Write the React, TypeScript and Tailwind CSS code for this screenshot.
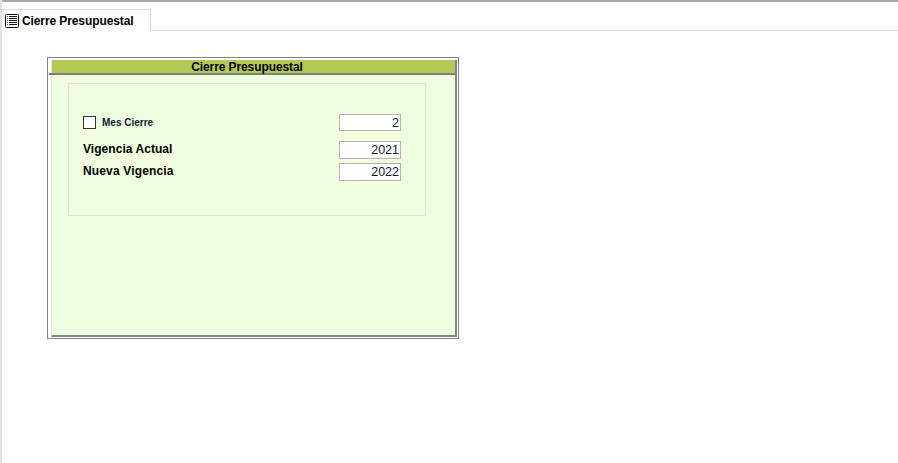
import React from 'react';

const Field = ({ value, className }: { value: string; className: string }) => (
  <div className={`w-[62px] bg-white border border-[#b4b4b4] text-right pr-px text-[12.5px] text-[#0c1a3a] font-['Liberation_Sans',sans-serif] ${className}`}>
    {value}
  </div>
);

const TabIcon = () => (
  <svg width="14" height="14" viewBox="0 0 14 14" className="shrink-0">
    <rect x="0.5" y="0.5" width="13" height="13" rx="1" fill="#fff" stroke="#111" />
    <path d="M4 2.5h8M4 4.5h8M4 6.5h8M4 8.5h8M4 10.5h8" stroke="#111" />
    <path d="M2 2.5h1M2 4.5h1M2 6.5h1M2 8.5h1M2 10.5h1" stroke="#d33" />
  </svg>
);

export default function App() {
  return (
    <div className="w-[898px] h-[463px] bg-white overflow-hidden border-l-2 border-[#e2e2e2] font-['Liberation_Sans',sans-serif]">
      <div className="h-[2px] -ml-[2px] bg-[#a8a8a8]" />
      {/* Tab strip */}
      <div className="flex items-end h-[29px]">
        <div className="w-[149px] h-[22px] flex items-center gap-[3px] pl-[3px] border-t border-r border-[#dcdcdc] text-[12px] tracking-[-0.1px] font-bold text-black whitespace-nowrap">
          <TabIcon />
          <span>Cierre Presupuestal</span>
        </div>
        <div className="flex-1 border-b border-[#dcdcdc]" />
      </div>

      {/* Window */}
      <div className="ml-[45px] mt-[26px] w-[412px] h-[282px] border border-[#84848c] pt-[2px] pl-[3px] pr-px pb-px bg-white">
        <div className="h-full flex flex-col border-r-2 border-b-2 border-[#84848c] border-l border-l-[#e6e6ea] bg-[#f0fee0]">
          <div className="h-[15px] shrink-0 -ml-[3px] border-b-2 border-[#7f7f7f]">
            <div className="h-[13px] ml-[3px] bg-[#b3c957] pr-[13px] text-center text-[12px] tracking-[-0.1px] leading-[14px] font-bold text-black">
              Cierre Presupuestal
            </div>
          </div>
          <div className="ml-[16px] mt-[8px] w-[358px] h-[133px] border border-[#dde5d2] pl-[14px] pr-[24px] pt-[30px]">
            <div className="flex items-center justify-between h-[17px]">
              <div className="flex items-center gap-[6px]">
                <div className="w-[13px] h-[13px] bg-white border border-[#333]" />
                <span className="text-[10px] font-bold text-[#0c1a3a]">Mes Cierre</span>
              </div>
              <Field value="2" className="h-[17px] leading-[16px]" />
            </div>
            <div className="flex items-center justify-between h-[18px] mt-[10px]">
              <span className="text-[12px] tracking-[0.05px] font-bold text-black -mt-[2px]">Vigencia Actual</span>
              <Field value="2021" className="h-[18px] leading-[17px]" />
            </div>
            <div className="flex items-center justify-between h-[18px] mt-[4px]">
              <span className="text-[12px] tracking-[0.15px] font-bold text-black -mt-[2px]">Nueva Vigencia</span>
              <Field value="2022" className="h-[18px] leading-[17px]" />
            </div>
          </div>
        </div>
      </div>
    </div>
  );
}
